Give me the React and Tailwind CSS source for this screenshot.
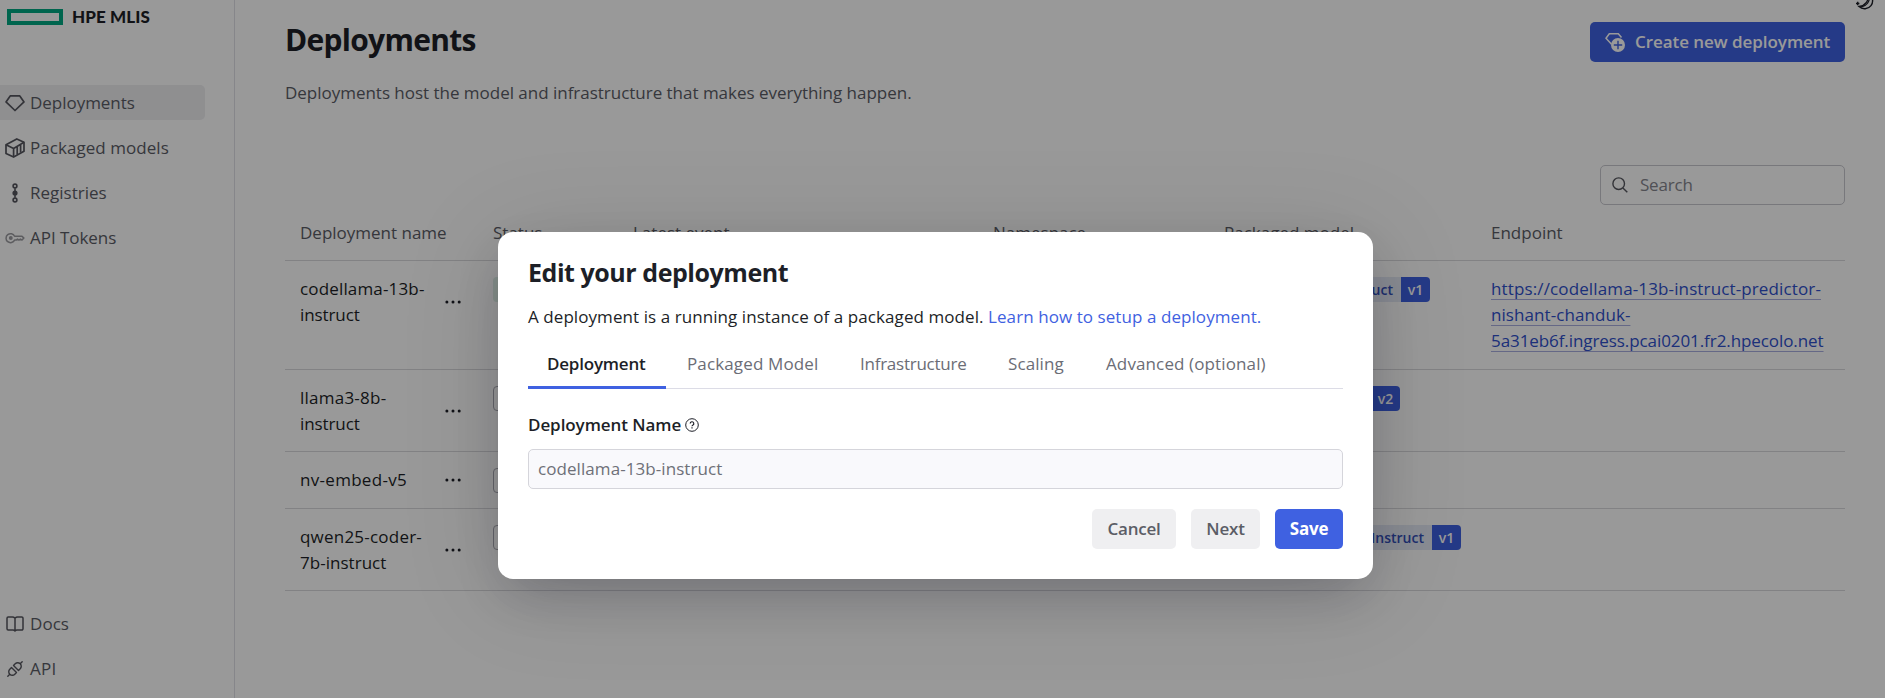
const F = "font-['Open_Sans','Noto_Sans',sans-serif]";

const DiamondIcon = () => (
  <svg width="20" height="20" viewBox="0 0 20 20" fill="none" stroke="currentColor" strokeWidth="1.7" strokeLinejoin="round">
    <path d="M5.200 2.900h9.600l4.200 6L10 17.500 1 8.900z" />
  </svg>
);
const BoxIcon = () => (
  <svg width="20" height="20" viewBox="0 0 20 20" fill="none" stroke="currentColor" strokeWidth="1.7" strokeLinejoin="round">
    <path d="M1 6.800 11.800.9l7.200 3.400v9L8.600 19.100 1 15.600z" />
    <path d="M1 6.800l7.600 3.800L19 4.300M8.600 10.600v8.400M12.200 8.800v7.800M15.600 6.800v7.800" />
  </svg>
);
const RegistryIcon = () => (
  <svg width="20" height="20" viewBox="0 0 20 20" fill="none" stroke="currentColor" strokeWidth="1.600">
    <circle cx="10" cy="3" r="1.900" />
    <circle cx="10" cy="10" r="1.800" fill="currentColor" />
    <circle cx="10" cy="17" r="1.900" />
    <path d="M10 5.200v9.600" />
  </svg>
);
const KeyIcon = () => (
  <svg width="20" height="20" viewBox="0 0 20 20" fill="none" stroke="currentColor" strokeWidth="1.500" strokeLinejoin="round">
    <path d="M9.600 8.200H17l1.900 1.900-1.900 2-1.600-1-1.500 1-1.400-1-1.300 1H9.600a4.500 4.500 0 1 1 0-3.900z" />
    <circle cx="5.800" cy="10" r="1.200" fill="currentColor" />
  </svg>
);
const BookIcon = () => (
  <svg width="20" height="20" viewBox="0 0 20 20" fill="none" stroke="currentColor" strokeWidth="1.500" strokeLinejoin="round">
    <path d="M10 4.200C9 3.200 8.500 3 7.500 3H3.200A1.200 1.200 0 0 0 2 4.200v10.600A1.200 1.200 0 0 0 3.200 16H8c1 0 1.500.300 2 1 .500-.700 1-1 2-1h4.800a1.200 1.200 0 0 0 1.200-1.200V4.200A1.200 1.200 0 0 0 16.800 3h-4.300C11.500 3 11 3.200 10 4.200zV17" />
  </svg>
);
const PlugIcon = () => (
  <svg width="20" height="20" viewBox="0 0 20 20" fill="none" stroke="currentColor" strokeWidth="1.400" strokeLinecap="round" strokeLinejoin="round">
    <path d="M2.800 17.200l2-2M4.800 15.200a3.500 3.500 0 0 1 0-5L6.500 8.500l5 5-1.700 1.700a3.500 3.500 0 0 1-5 0zM17.200 2.800l-2 2M15.200 4.800a3.500 3.500 0 0 1 0 5l-1.700 1.700-5-5 1.700-1.700a3.500 3.500 0 0 1 5 0z" />
  </svg>
);
const NewDeploymentIcon = () => (
  <svg width="20" height="20" viewBox="0 0 20 20" fill="none">
    <path d="M6.500 12.300 1 6.200 4.300 1.700h9L16.500 5.500" stroke="currentColor" strokeWidth="1.500" />
    <circle cx="13" cy="13" r="7" fill="currentColor" />
    <path d="M13 8.800v8.400M8.800 13h8.400" stroke="#3f61e1" strokeWidth="1.400" />
  </svg>
);
const SearchIcon = () => (
  <svg width="16" height="16" viewBox="0 0 16 16" fill="none" stroke="currentColor" strokeWidth="1.400">
    <circle cx="6.700" cy="6.700" r="5.800" />
    <path d="M10.900 10.900l4.400 4.400" />
  </svg>
);
const MoonIcon = () => (
  <svg width="18" height="18" viewBox="0 0 18 18" fill="none" stroke="currentColor" strokeWidth="1.400">
    <path d="M12.500.800a8 8 0 1 1-9.500 12.700C9 13 13 8 12.500.800z" />
    <path d="M5 14C10.500 13 14 8.500 13.500 2" />
    <path d="M1.700 8.800v3.400M0 10.500h3.400" />
  </svg>
);
const HelpIcon = () => (
  <svg width="14" height="14" viewBox="0 0 14 14" fill="none" stroke="currentColor" strokeWidth="1">
    <circle cx="7" cy="7" r="6.300" />
    <path d="M5.200 5.600a1.800 1.800 0 1 1 2.500 1.600c-.5.200-.7.500-.7 1.100M7 9.300v1.200" strokeWidth="1.200" />
  </svg>
);
const Dots = () => (
  <svg width="16" height="4" viewBox="0 0 16 4" fill="currentColor">
    <circle cx="1.900" cy="2" r="1.500" />
    <circle cx="8" cy="2" r="1.500" />
    <circle cx="14.200" cy="2" r="1.500" />
  </svg>
);

const NavItem = ({ icon, label, active, track, dim }) => (
  <a className={`flex h-[35px] w-[205px] items-center gap-[5px] rounded-r-[5px] pl-[5px] ${active ? "bg-[#eeeef1]" : ""}`}>
    <span className={dim ? "text-[#9b9ba0]" : "text-[#55565e]"}>{icon}</span>
    <span className={`text-[#5b5d66] ${track}`}>{label}</span>
  </a>
);

const COLS = "grid grid-cols-[193px_140px_360px_231px_267px_369px]";

const rows = [
  { name: ["codellama-13b-", "instruct"], track: ["tracking-[0.16px]", "tracking-[-0.1px]"], h: "h-[109px]", ready: true, model: "codellama-13b-instruct", modelW: "w-[177px]", version: "v1",
    url: [
      { text: "https://codellama-13b-instruct-predictor-", track: "tracking-[0.13px]" },
      { text: "nishant-chanduk-", track: "tracking-[0.07px]" },
      { text: "5a31eb6f.ingress.pcai0201.fr2.hpecolo.net", track: "tracking-[-0.08px]" },
    ] },
  { name: ["llama3-8b-", "instruct"], track: ["tracking-[0.24px]", "tracking-[-0.1px]"], h: "h-[82px]", model: "instruct", modelW: "w-[147px]", version: "v2" },
  { name: ["nv-embed-v5"], track: ["tracking-[0.3px]"], h: "h-[57px]" },
  { name: ["qwen25-coder-", "7b-instruct"], track: ["tracking-[0.22px]", "tracking-[0.03px]"], h: "h-[82px]", model: "Instruct", modelW: "w-[208px]", version: "v1" },
];

const Row = ({ row }) => (
  <div className={`${COLS} ${row.h} items-start border-b border-[#d9d9dc] pt-[15px]`}>
    <div className="flex items-center justify-between pr-[17px] pl-[15px]">
      <div className="flex flex-col">
        {row.name.map((n, i) => (
          <span key={n} className={`whitespace-nowrap ${row.track[i]}`}>{n}</span>
        ))}
      </div>
      <Dots />
    </div>
    <div className="pt-px pl-[15px]">
      <div className={`h-[25px] w-[70px] rounded-[4px] ${row.ready ? "bg-[#dff0e8]" : "border border-[#a9a9b2]"}`} />
    </div>
    <div />
    <div />
    <div className="pt-px pl-[15px]">
      {row.model && (
        <div className="flex h-[25px] text-[14px] leading-[25px] font-semibold">
          <span className={`overflow-hidden rounded-l-[4px] bg-[#e4e9f6] pr-2 text-right whitespace-nowrap text-[#3550b8] ${row.modelW}`}>{row.model}</span>
          <span className="w-[29px] rounded-r-[4px] bg-[#3f61e1] text-center text-white">{row.version}</span>
        </div>
      )}
    </div>
    <div className="flex flex-col items-start pl-[15px] text-[#2f50cc]">
      {row.url?.map((u) => (
        <span key={u.text} className={`h-[26px] whitespace-nowrap underline decoration-[#a9aee0] decoration-1 underline-offset-[4px] ${u.track}`}>{u.text}</span>
      ))}
    </div>
  </div>
);

const Tab = ({ label, className }) => <div className={`whitespace-nowrap ${className}`}>{label}</div>;

export default function App() {
  return (
    <div className={`relative h-[698px] w-[1885px] overflow-hidden bg-white text-[17px] leading-[26px] text-[#1d1f27] ${F}`}>
      <div className="flex h-full">
        <aside className="flex w-[235px] shrink-0 flex-col border-r border-[#e0e0e6]">
          <div className="flex h-[85px] items-start gap-[9px] pt-[9px] pl-[7px]">
            <div className="h-[16px] w-[56px] border-4 border-[#01a982]" />
            <div className="mt-[-1px] font-['Lato',sans-serif] text-[17px] leading-[18px] font-black tracking-[0.1px]">HPE MLIS</div>
          </div>
          <nav className="flex flex-col gap-2.5">
            <NavItem active icon={<DiamondIcon />} label="Deployments" track="tracking-[-0.03px]" />
            <NavItem icon={<BoxIcon />} label="Packaged models" track="tracking-[0.05px]" />
            <NavItem icon={<RegistryIcon />} label="Registries" track="" />
            <NavItem dim icon={<KeyIcon />} label="API Tokens" track="tracking-[-0.05px]" />
          </nav>
          <nav className="mt-auto mb-[12px] flex flex-col gap-2.5">
            <NavItem icon={<BookIcon />} label="Docs" track="tracking-[0.05px]" />
            <NavItem icon={<PlugIcon />} label="API" track="tracking-[0.2px]" />
          </nav>
        </aside>

        <main className="flex w-[1610px] flex-col pl-[50px]">
          <header className="flex items-start justify-between pt-[22px]">
            <div>
              <h1 className="text-[30px] leading-[36px] font-bold tracking-[-0.72px]">Deployments</h1>
              <p className="mt-[22px] tracking-[-0.02px] text-[#5b5d66]">
                Deployments host the model and infrastructure that makes everything happen.
              </p>
            </div>
            <button className="flex h-[40px] w-[255px] items-center rounded-[5px] bg-[#3f61e1] pl-[15px] font-semibold whitespace-nowrap text-white">
              <NewDeploymentIcon />
              <span className="ml-[10px] tracking-[-0.05px]">Create new deployment</span>
            </button>
          </header>
          <div className="mt-[59px] flex h-[40px] w-[245px] items-center gap-[12px] self-end rounded-[5px] border border-[#c9c9cf] pl-[11px]">
            <span className="text-[#55565e]"><SearchIcon /></span>
            <span className="-mt-px text-[#85868e] tracking-[-0.2px]">Search</span>
          </div>
          <div className={`${COLS} h-[56px] items-start border-b border-[#d9d9dc] pt-[15px] text-[#5b5d66]`}>
            {["Deployment name", "Status", "Latest event", "Namespace", "Packaged model", "Endpoint"].map((c) => (
              <div key={c} className="pl-[15px]">{c}</div>
            ))}
          </div>
          {rows.map((r) => <Row key={r.name[0]} row={r} />)}
        </main>
      </div>

      <div className="absolute top-[-7px] right-[11px]"><MoonIcon /></div>

      <div className="absolute inset-0 bg-black/40 pt-[232px] pl-[498px]">
        <div className="flex h-[347px] w-[875px] flex-col rounded-[15px] bg-white px-[30px] pt-[22px] shadow-[0_20px_50px_-10px_rgba(20,20,40,0.22),0_10px_100px_0_rgba(0,0,0,0.13)]">
          <h2 className="text-[25px] leading-[36px] font-bold tracking-[-0.45px]">Edit your deployment</h2>
          <p className="mt-[14px] tracking-[0.07px]">
            A deployment is a running instance of a packaged model.{" "}
            <a className="text-[#3f61e1]">Learn how to setup a deployment.</a>
          </p>
          <div className="mt-[16px] flex h-[43px] items-stretch border-b border-[#dcdce6] pt-[5px] text-[#6b6d76]">
            <Tab label="Deployment" className="-mb-px w-[138px] border-b-3 border-[#3f61e1] pl-[19px] font-semibold tracking-[-0.2px] text-[#1d1f27]" />
            <Tab label="Packaged Model" className="w-[173px] pl-[21px] tracking-[0.13px]" />
            <Tab label="Infrastructure" className="w-[148px] pl-[21px] tracking-[-0.25px]" />
            <Tab label="Scaling" className="w-[98px] pl-[21px] tracking-[0.1px]" />
            <Tab label="Advanced (optional)" className="pl-[21px] tracking-[0.12px]" />
          </div>
          <div className="mt-[23px] flex items-center gap-[4px]">
            <span className="font-semibold tracking-[-0.07px]">Deployment Name</span>
            <HelpIcon />
          </div>
          <div className="mt-[11px] h-[40px] shrink-0 rounded-[5px] border border-[#d5d5db] bg-[#f9f9fc] pl-[9px] leading-[37px] tracking-[0.07px] text-[#6e7078]">codellama-13b-instruct</div>
          <div className="mt-[20px] flex justify-end gap-[15px] font-semibold tracking-[-0.2px]">
            <button className="h-[40px] w-[84px] rounded-[5px] bg-[#efeff1] text-[#5b5d66]">Cancel</button>
            <button className="h-[40px] w-[69px] rounded-[5px] bg-[#efeff1] text-[#5b5d66]">Next</button>
            <button className="h-[40px] w-[68px] rounded-[5px] bg-[#3f61e1] font-bold text-white">Save</button>
          </div>
        </div>
      </div>
    </div>
  );
}
